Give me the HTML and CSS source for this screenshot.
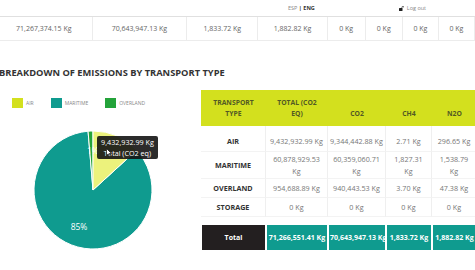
FILE: index.html
```html
<!DOCTYPE html>
<html lang="en">
<head>
  <meta charset="UTF-8">
  <meta name="viewport" content="width=device-width, initial-scale=1.0">
  <title>Emissions by transport type</title>
  <link rel="stylesheet" href="styles.css">
</head>
<body>
  <header class="topbar">
    <div class="lang"><span class="lang-off">ESP</span> <b>|</b> <b>ENG</b></div>
    <a class="logout" href="#">
      <svg width="5" height="5" viewBox="0 0 10 10"><path d="M6 4V2.5a1.8 1.8 0 0 1 3.6 0V3" fill="none" stroke="#222" stroke-width="1.4"/><rect x="0" y="4" width="7" height="6" rx="1" fill="#222"/></svg>
      Log out
    </a>
  </header>

  <div class="totals">
    <div class="totals-cell">71,267,374.15 Kg</div>
    <div class="totals-cell">70,643,947.13 Kg</div>
    <div class="totals-cell">1,833.72 Kg</div>
    <div class="totals-cell">1,882.82 Kg</div>
    <div class="totals-cell">0 Kg</div>
    <div class="totals-cell">0 Kg</div>
    <div class="totals-cell">0 Kg</div>
    <div class="totals-cell">0 Kg</div>
  </div>

  <section class="breakdown">
    <h2>BREAKDOWN OF EMISSIONS BY TRANSPORT TYPE</h2>
    <div class="breakdown-body">
      <div class="chart">
        <ul class="legend">
          <li><span class="swatch air"></span>AIR</li>
          <li><span class="swatch maritime"></span>MARITIME</li>
          <li><span class="swatch overland"></span>OVERLAND</li>
        </ul>
        <div class="pie-wrap">
          <svg class="pie" width="195" height="140" viewBox="0 0 195 140">
            <path d="M93 74 L136.57 34.22 A59 59 0 1 1 88.06 15.21 Z" fill="#0f9b8f" stroke="#fff" stroke-width="1"/>
            <path d="M93 74 L88.06 15.21 A59 59 0 0 1 93 15 Z" fill="#24a33a" stroke="#fff" stroke-width="1"/>
            <path d="M93 74 L93 15 A59 59 0 0 1 136.57 34.22 Z" fill="#ecf27c" stroke="#fff" stroke-width="1"/>
            <text x="79" y="114" class="pie-label" text-anchor="middle">85%</text>
            <text x="87" y="37.5" class="pie-label">1%</text>
          </svg>
          <div class="tooltip">9,432,932.99 Kg<br>Total (CO2 eq)</div>
          <svg class="cursor" width="6" height="9" viewBox="0 0 6 9"><path d="M0.5 0.5 L0.5 7.5 L2.2 5.9 L3.4 8.5 L4.4 8 L3.3 5.5 L5.5 5.5 Z" fill="#fff" stroke="#111" stroke-width="0.7"/></svg>
        </div>
      </div>

      <table class="emissions">
        <colgroup>
          <col class="c-type"><col class="c-total"><col class="c-co2"><col class="c-ch4"><col class="c-n2o">
        </colgroup>
        <thead>
          <tr>
            <th>TRANSPORT<br>TYPE</th>
            <th>TOTAL (CO2<br>EQ)</th>
            <th>CO2</th>
            <th>CH4</th>
            <th>N2O</th>
          </tr>
        </thead>
        <tbody>
          <tr>
            <td class="name">AIR</td>
            <td>9,432,932.99 Kg</td>
            <td>9,344,442.88 Kg</td>
            <td>2.71 Kg</td>
            <td>296.65 Kg</td>
          </tr>
          <tr>
            <td class="name">MARITIME</td>
            <td>60,878,929.53<br>Kg</td>
            <td>60,359,060.71<br>Kg</td>
            <td>1,827.31<br>Kg</td>
            <td>1,538.79<br>Kg</td>
          </tr>
          <tr>
            <td class="name">OVERLAND</td>
            <td>954,688.89 Kg</td>
            <td>940,443.53 Kg</td>
            <td>3.70 Kg</td>
            <td>47.38 Kg</td>
          </tr>
          <tr>
            <td class="name">STORAGE</td>
            <td>0 Kg</td>
            <td>0 Kg</td>
            <td>0 Kg</td>
            <td>0 Kg</td>
          </tr>
          <tr class="total">
            <td class="total-label">Total</td>
            <td>71,266,551.41 Kg</td>
            <td>70,643,947.13 Kg</td>
            <td>1,833.72 Kg</td>
            <td>1,882.82 Kg</td>
          </tr>
        </tbody>
      </table>
    </div>
  </section>
</body>
</html>
```

FILE: styles.css
```css
body {
  font-family: "Open Sans", sans-serif;
  margin: 0;
  width: 475px;
  height: 270px;
  overflow: hidden;
  background: #fff;
  color: #333;
}
.topbar {
  height: 16px;
  display: flex;
  align-items: center;
  padding-left: 288px;
  border-bottom: 1px solid #e0e0e0;
  font-size: 5.5px;
}
.lang {
  color: #333;
}
.lang-off {
  color: #888;
}
.logout {
  margin-left: 84px;
  display: flex;
  align-items: center;
  gap: 3px;
  color: #888;
  text-decoration: none;
}
.totals {
  display: flex;
  height: 23px;
  margin-left: -4px;
  border-bottom: 1px solid #ececec;
  font-size: 7px;
  color: #666;
}
.totals-cell {
  display: flex;
  align-items: center;
  justify-content: center;
  border-right: 1px solid #ececec;
  white-space: nowrap;
}
.totals-cell:nth-child(1) { width: 98px; }
.totals-cell:nth-child(2) { width: 96px; }
.totals-cell:nth-child(3) { width: 72px; }
.totals-cell:nth-child(4) { width: 70px; }
.totals-cell:nth-child(5) { width: 38px; }
.totals-cell:nth-child(6) { width: 37px; }
.totals-cell:nth-child(7) { width: 36px; }
.totals-cell:nth-child(8) { width: 36px; }
.breakdown h2 {
  margin: 25px 0 10px -1px;
  font-size: 9.3px;
  line-height: 14px;
  font-weight: 700;
  color: #333;
  white-space: nowrap;
}
.breakdown-body {
  display: flex;
  align-items: flex-start;
}
.chart {
  width: 201px;
  flex-shrink: 0;
}
.legend {
  list-style: none;
  margin: 0;
  padding: 8px 0 0 12px;
  display: flex;
  gap: 17px;
  font-size: 5px;
  color: #888;
}
.legend li {
  display: flex;
  align-items: center;
  gap: 3px;
  height: 10px;
}
.swatch {
  width: 11px;
  height: 10px;
}
.swatch.air { background: #d3e01e; }
.swatch.maritime { background: #0f9b8f; }
.swatch.overland { background: #24a33a; }
.pie-wrap {
  position: relative;
  margin-top: 8px;
  height: 140px;
}
.pie {
  display: block;
}
.pie-label {
  font-family: "Open Sans", sans-serif;
  font-size: 8.5px;
  fill: #fff;
}
.tooltip {
  position: absolute;
  left: 97px;
  top: 20px;
  width: 61px;
  height: 23px;
  box-sizing: border-box;
  padding-top: 0.5px;
  background: rgba(20, 20, 20, 0.9);
  border-radius: 2px;
  color: #fff;
  font-size: 7.2px;
  line-height: 11px;
  text-align: center;
  white-space: nowrap;
}
.cursor {
  position: absolute;
  left: 106px;
  top: 32px;
}
.emissions {
  border-collapse: separate;
  border-spacing: 0;
  table-layout: fixed;
  width: 276px;
  flex-shrink: 0;
  font-size: 7.2px;
}
.c-type { width: 65px; }
.c-total { width: 62px; }
.c-co2 { width: 58px; }
.c-ch4 { width: 46px; }
.c-n2o { width: 45px; }
.emissions thead tr {
  height: 36px;
}
.emissions th {
  background: #d3e01e;
  color: #525a24;
  font-size: 6.8px;
  font-weight: 700;
  line-height: 11px;
  vertical-align: bottom;
  padding: 0 2px 7px;
}
.emissions tbody tr {
  height: 19px;
}
.emissions td {
  padding: 1px 2px;
  line-height: 12px;
  text-align: center;
  white-space: nowrap;
  color: #777;
  border-right: 1px solid #efefef;
  border-bottom: 1px solid #f3f3f3;
}
.emissions tbody tr:first-child td {
  padding-top: 9px;
  padding-bottom: 4px;
}
.emissions td.name {
  color: #333;
  font-weight: 700;
}
.emissions tr.total {
  height: 33px;
}
.emissions tr.total td {
  background: #0f9b8f;
  color: #fff;
  font-weight: 700;
  font-size: 7px;
  padding: 0 1px;
  border-top: 8px solid #fff;
  border-left: 1px solid #fff;
  border-right: 1px solid #fff;
  border-bottom: 0;
}
.emissions tr.total td.total-label {
  background: #231f20;
}
```
